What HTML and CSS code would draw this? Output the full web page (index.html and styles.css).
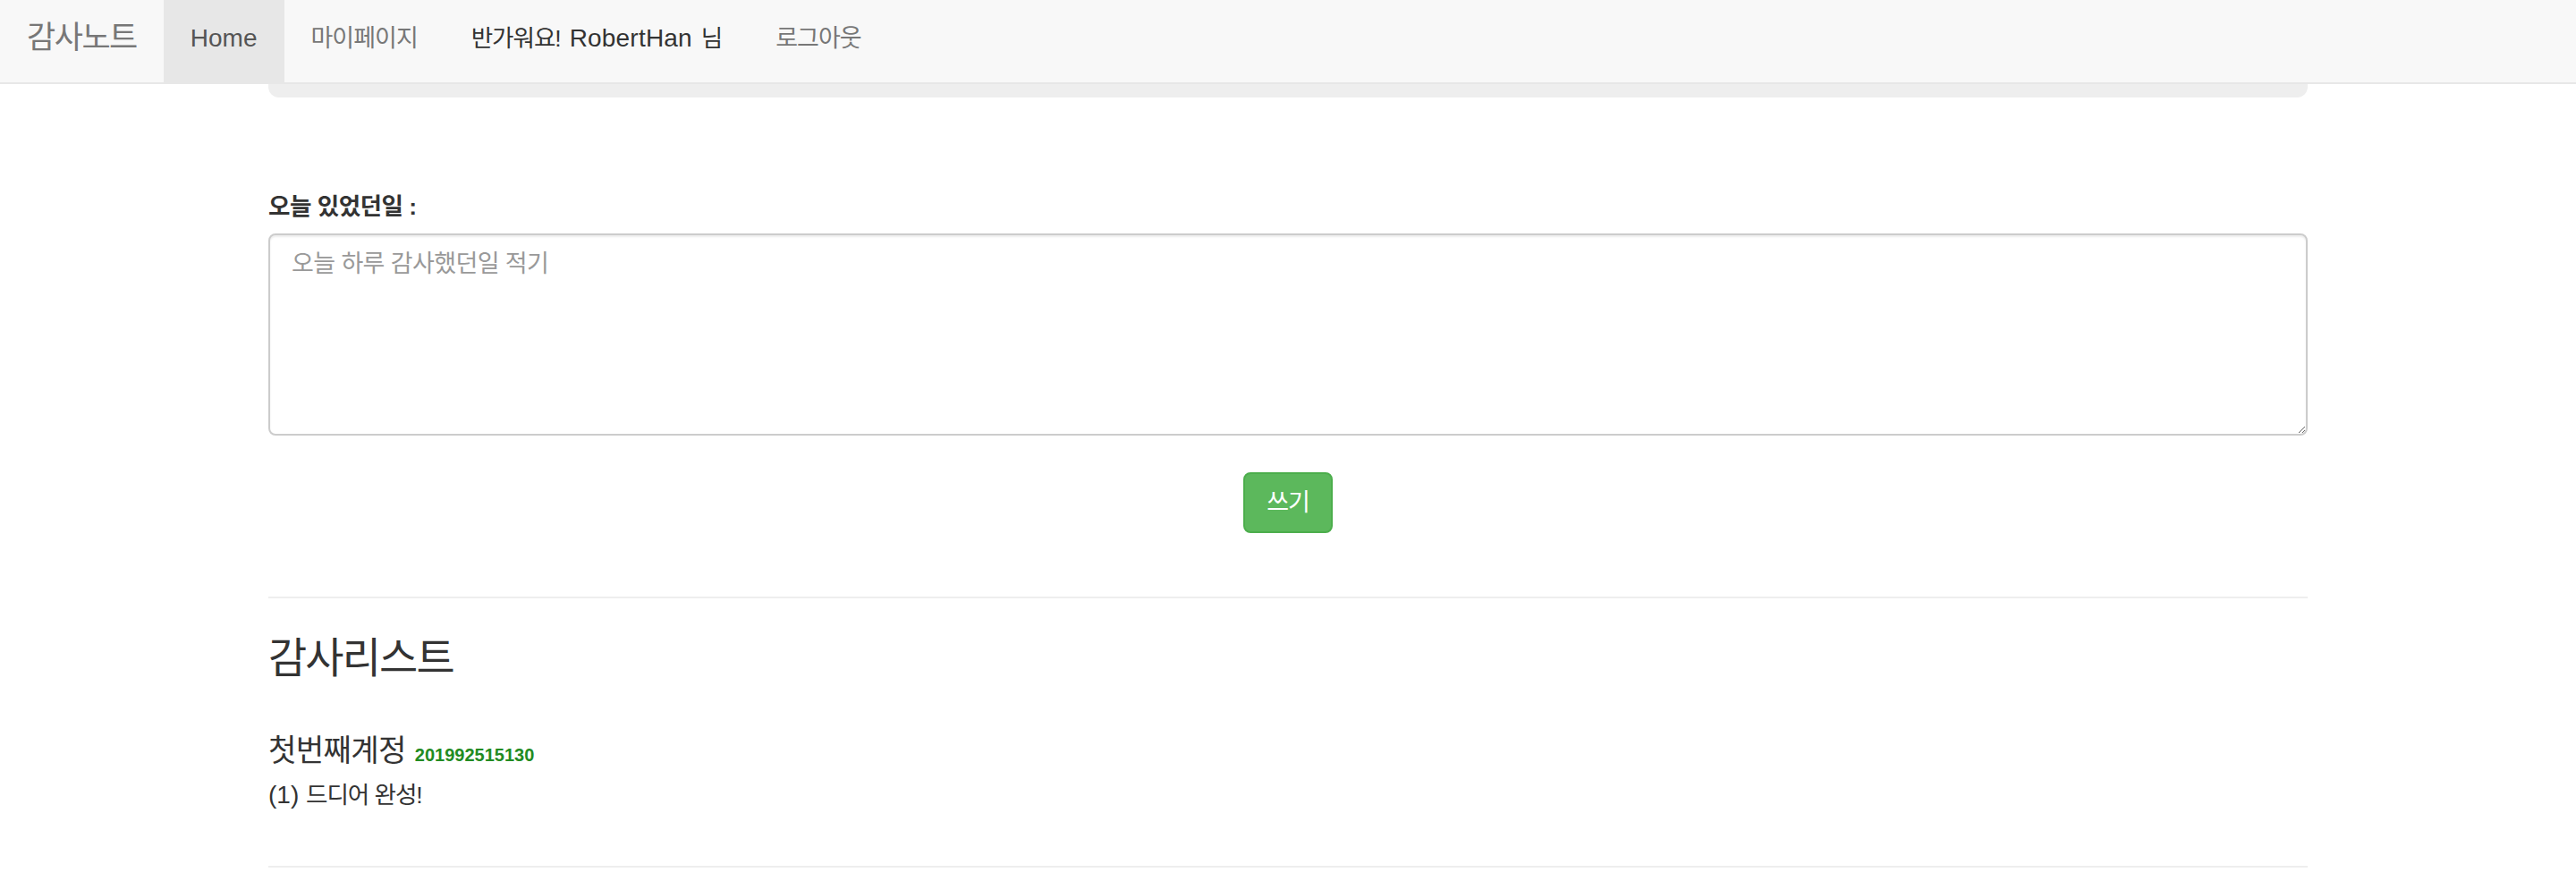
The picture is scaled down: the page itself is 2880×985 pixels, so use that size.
FILE: index.html
```html
<!DOCTYPE html>
<html lang="ko">
<head>
  <meta charset="UTF-8" />
  <title>감사노트</title>
  <link rel="stylesheet" href="styles.css">
</head>
<body>

  <nav class="navbar">
    <a class="brand" href="#">감사노트</a>
    <ul class="nav">
      <li class="active"><a href="#">Home</a></li>
      <li><a href="#">마이페이지</a></li>
    </ul>
    <p class="navbar-text"><span class="ko">반가워요!</span> RobertHan <span class="ko">님</span></p>
    <ul class="nav">
      <li><a href="#">로그아웃</a></li>
    </ul>
  </nav>

  <div class="container">
    <div class="jumbotron"></div>

    <form class="write-form">
      <label for="content" class="ko">오늘 있었던일 :</label>
      <textarea id="content" placeholder="오늘 하루 감사했던일 적기"></textarea>
      <div class="actions">
        <button type="submit" class="btn-success">쓰기</button>
      </div>
    </form>

    <hr />

    <h3 class="ko">감사리스트</h3>

    <div class="item">
      <h4><span class="ko">첫번째계정</span> <small>201992515130</small></h4>
      <p>(1) <span class="ko">드디어 완성!</span></p>
    </div>

    <hr class="last" />
  </div>

</body>
</html>
```

FILE: styles.css
```css
body {
  margin: 0;
  font-family: "Liberation Sans", "Noto Sans CJK KR", sans-serif;
  font-size: 28px;
  line-height: 40px;
  color: #333;
  background: #fff;
}

a {
  text-decoration: none;
}

.ko {
  font-size: 0.95em;
  letter-spacing: -0.04em;
}

/* 상단 고정 메뉴 */
.navbar {
  position: fixed;
  top: 0;
  left: 0;
  right: 0;
  z-index: 10;
  height: 92px;
  display: flex;
  align-items: flex-start;
  background-color: #f8f8f8;
  border-bottom: 2px solid #e7e7e7;
}

.brand {
  padding: 22px 30px 30px;
  font-size: 35px;
  letter-spacing: -1.5px;
  color: #777;
}

.nav {
  display: flex;
  margin: 0;
  padding: 0;
  list-style: none;
}

.nav a {
  display: block;
  height: 40px;
  padding: 23px 30px 29px;
  color: #777;
}

.nav li:not(.active) a {
  font-size: 27px;
  letter-spacing: -1px;
}

.nav .active a {
  background-color: #e7e7e7;
  color: #555;
}

.navbar-text {
  margin: 23px 30px 0;
  word-spacing: 2px;
  letter-spacing: 0.2px;
  color: #333;
}

.container {
  width: 2280px;
  margin: 0 auto;
}

.jumbotron {
  height: 109px;
  background-color: #eee;
  border-radius: 12px;
}

/* 글쓰기 */
.write-form label {
  display: block;
  margin: 102px 0 10px;
  font-weight: bold;
  letter-spacing: -0.02em;
}

.write-form textarea {
  display: block;
  box-sizing: border-box;
  width: 100%;
  height: 226px;
  padding: 12px 24px;
  font-family: inherit;
  font-size: 27px;
  line-height: 40px;
  letter-spacing: -0.6px;
  color: #555;
  border: 2px solid #ccc;
  border-radius: 8px;
  box-shadow: inset 0 2px 2px rgba(0, 0, 0, 0.075);
}

.write-form textarea::placeholder {
  color: #999;
}

.actions {
  margin-top: 41px;
  text-align: center;
}

.btn-success {
  padding: 12px 24px;
  font-family: inherit;
  font-size: 27px;
  line-height: 40px;
  letter-spacing: -1px;
  color: #fff;
  background-color: #5cb85c;
  border: 2px solid #4cae4c;
  border-radius: 8px;
  cursor: pointer;
}

hr {
  margin: 71px 0 0;
  border: 0;
  border-top: 2px solid #eee;
}

hr.last {
  margin-top: 59px;
}

h3 {
  margin: 40px 0 0;
  font-size: 48px;
  line-height: 53px;
  font-weight: normal;
}

h3.ko {
  font-size: 47px;
}

.item h4 {
  margin: 57px 0 0;
  font-size: 36px;
  line-height: 40px;
  font-weight: normal;
}

.item h4 .ko {
  letter-spacing: -0.02em;
}

.item h4 small {
  font-size: 20px;
  font-weight: bold;
  color: #228b22;
}

.item p {
  margin: 5px 0 0;
}
```
